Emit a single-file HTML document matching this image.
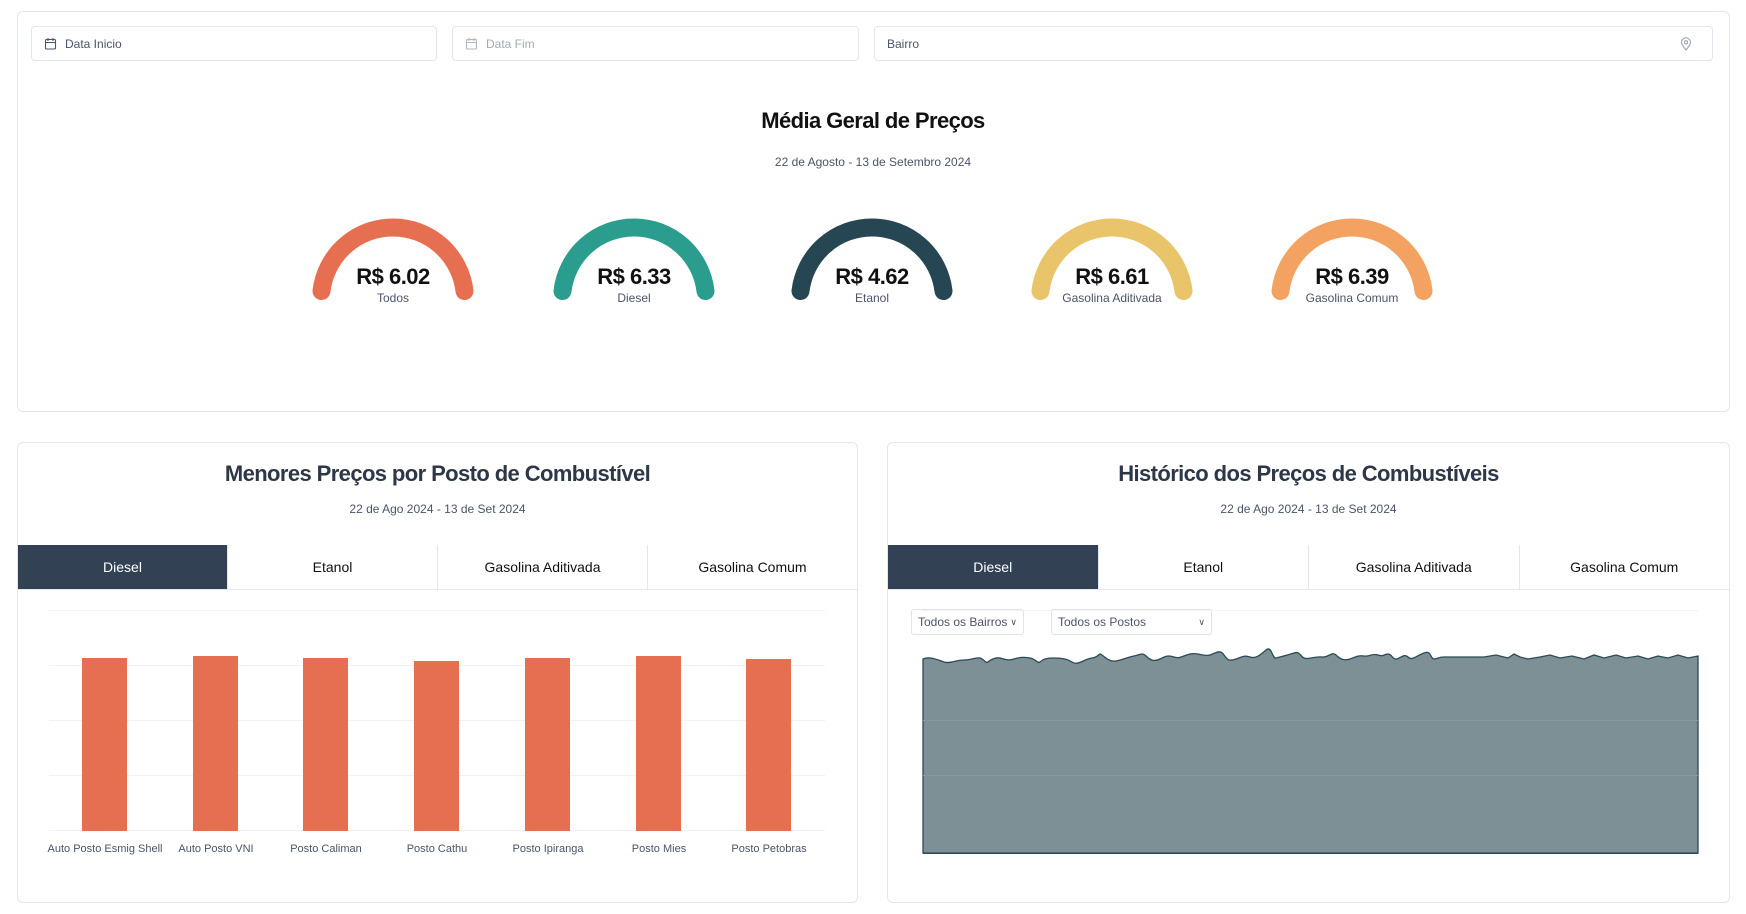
<!DOCTYPE html>
<html><head><meta charset="utf-8"><style>
*{box-sizing:border-box;margin:0;padding:0}
html,body{width:1746px;height:914px;overflow:hidden}
body{background:#fff;font-family:"Liberation Sans",sans-serif;position:relative}
.card{position:absolute;border:1px solid #e2e6ee;border-radius:6px;background:#fff;overflow:hidden}
.inp{position:absolute;top:26px;height:35px;border:1px solid #e2e6ee;border-radius:4px;font-size:12px;color:#4a5568;display:flex;align-items:center;padding-left:12px}
.inp svg{margin-right:8px}
.ab{position:absolute;text-align:center;width:100%}
.g{position:absolute;top:216px;width:180px;height:100px;text-align:center}
.g svg{position:absolute;left:0;top:0}
.g .v{position:absolute;top:48px;width:180px;font-size:22px;font-weight:bold;color:#111;letter-spacing:-0.5px}
.g .l{position:absolute;top:75px;width:180px;font-size:12px;color:#4a5568}
.tabs{position:absolute;top:102px;left:0;right:0;height:45px;display:flex;border-bottom:1px solid #e2e6ee}
.tabs div{flex:1;display:flex;align-items:center;justify-content:center;font-size:14px;color:#111;border-left:1px solid #e2e6ee}
.tabs div.a{background:#334155;color:#fff;border-left:none}
.t{font-size:22px;font-weight:bold;color:#2d3748;letter-spacing:-0.6px}
.s{font-size:12px;color:#4a5568}
.xl{position:absolute;top:400px;font-size:11px;color:#4a5568;width:130px;text-align:center}
.sel{position:absolute;top:166px;height:26px;border:1px solid #dfe3ea;border-radius:3px;font-size:12px;color:#4a5568;padding-left:6px;display:flex;align-items:center}
.sel span{position:absolute;right:6px;font-size:9px}
</style></head><body>
<div class="card" style="left:17px;top:11px;width:1713px;height:401px"></div>
<div class="inp" style="left:31px;width:406px"><svg width="13" height="13" viewBox="0 0 13 13" fill="none" stroke="#4a5568" stroke-width="1.1"><rect x="1.5" y="2.5" width="10" height="9.5" rx="1"/><path d="M1.5 5.5h10M4 1v3M9 1v3"/></svg>Data Inicio</div>
<div class="inp" style="left:452px;width:407px;color:#a0aab8"><svg width="13" height="13" viewBox="0 0 13 13" fill="none" stroke="#b0b8c4" stroke-width="1.1"><rect x="1.5" y="2.5" width="10" height="9.5" rx="1"/><path d="M1.5 5.5h10M4 1v3M9 1v3"/></svg>Data Fim</div>
<div class="inp" style="left:874px;width:839px">Bairro<svg style="position:absolute;right:12px" width="12" height="14" viewBox="0 0 12 14" fill="none" stroke="#9aa3b0" stroke-width="1.1"><path d="M6 13C3 9.5 1.5 7.3 1.5 5.3a4.5 4.5 0 0 1 9 0C10.5 7.3 9 9.5 6 13z"/><circle cx="6" cy="5.3" r="1.6"/></svg></div>
<div class="ab" style="top:108px;font-size:22px;font-weight:bold;color:#111;letter-spacing:-0.6px">Média Geral de Preços</div>
<div class="ab s" style="top:155px">22 de Agosto - 13 de Setembro 2024</div>

<div class="g" style="left:303px"><svg width="180" height="100" viewBox="0 0 180 100"><path d="M18.5 75 A72 72 0 0 1 161.5 75" fill="none" stroke="#e76f51" stroke-width="18" stroke-linecap="round"/></svg><div class="v">R$ 6.02</div><div class="l">Todos</div></div>
<div class="g" style="left:544px"><svg width="180" height="100" viewBox="0 0 180 100"><path d="M18.5 75 A72 72 0 0 1 161.5 75" fill="none" stroke="#2a9d8f" stroke-width="18" stroke-linecap="round"/></svg><div class="v">R$ 6.33</div><div class="l">Diesel</div></div>
<div class="g" style="left:782px"><svg width="180" height="100" viewBox="0 0 180 100"><path d="M18.5 75 A72 72 0 0 1 161.5 75" fill="none" stroke="#264653" stroke-width="18" stroke-linecap="round"/></svg><div class="v">R$ 4.62</div><div class="l">Etanol</div></div>
<div class="g" style="left:1022px"><svg width="180" height="100" viewBox="0 0 180 100"><path d="M18.5 75 A72 72 0 0 1 161.5 75" fill="none" stroke="#e9c46a" stroke-width="18" stroke-linecap="round"/></svg><div class="v">R$ 6.61</div><div class="l">Gasolina Aditivada</div></div>
<div class="g" style="left:1262px"><svg width="180" height="100" viewBox="0 0 180 100"><path d="M18.5 75 A72 72 0 0 1 161.5 75" fill="none" stroke="#f4a261" stroke-width="18" stroke-linecap="round"/></svg><div class="v">R$ 6.39</div><div class="l">Gasolina Comum</div></div>

<div class="card" style="left:17px;top:442px;width:841px;height:461px">
 <div class="ab t" style="top:18px">Menores Preços por Posto de Combustível</div>
 <div class="ab s" style="top:59px">22 de Ago 2024 - 13 de Set 2024</div>
 <div class="tabs"><div class="a">Diesel</div><div>Etanol</div><div>Gasolina Aditivada</div><div>Gasolina Comum</div></div>
 <svg style="position:absolute;left:0;top:0" width="841" height="461">
  <g stroke="#f0f2f5" stroke-width="1"><path d="M31 167.5h776M31 222.5h776M31 277.5h776M31 332.5h776M31 387.5h776"/></g>
  <g fill="#e76f51">
   <rect x="64" y="215" width="45" height="173"/><rect x="175" y="213" width="45" height="175"/><rect x="285" y="215" width="45" height="173"/><rect x="396" y="218" width="45" height="170"/><rect x="507" y="215" width="45" height="173"/><rect x="618" y="213" width="45" height="175"/><rect x="728" y="216" width="45" height="172"/>
  </g>
 </svg>
 <div class="xl" style="left:22px">Auto Posto Esmig Shell</div>
 <div class="xl" style="left:133px">Auto Posto VNI</div>
 <div class="xl" style="left:243px">Posto Caliman</div>
 <div class="xl" style="left:354px">Posto Cathu</div>
 <div class="xl" style="left:465px">Posto Ipiranga</div>
 <div class="xl" style="left:576px">Posto Mies</div>
 <div class="xl" style="left:686px">Posto Petobras</div>
</div>

<div class="card" style="left:887px;top:442px;width:843px;height:461px">
 <div class="ab t" style="top:18px">Histórico dos Preços de Combustíveis</div>
 <div class="ab s" style="top:59px">22 de Ago 2024 - 13 de Set 2024</div>
 <div class="tabs"><div class="a">Diesel</div><div>Etanol</div><div>Gasolina Aditivada</div><div>Gasolina Comum</div></div>
 <svg style="position:absolute;left:0;top:0" width="843" height="461">
  <path d="M34 167.5h776" stroke="#f0f2f5"/>
  <path d="M35 216 C42 213 50 217 56 219 S68 217 76 217 S88 214 92 215 S98 221 100 219 S108 214 112 215 S120 218 126 216 S136 214 142 215 S150 221 152 219 S158 215 164 215 S178 215 184 219 S196 216 204 215 S210 209 214 212 S222 219 228 218 S240 214 246 213 S254 209 258 213 S266 219 272 216 S280 212 286 214 S294 213 302 211 S316 214 322 212 S332 206 336 212 S342 218 348 216 S356 212 362 214 S372 212 378 207 S384 216 388 215 S400 212 406 210 S412 213 416 215 S428 213 434 214 S444 208 448 212 S456 218 462 216 S470 212 476 213 S484 210 490 212 S496 211 500 211 S504 216 508 216 S516 210 520 214 S528 213 536 210 S542 216 546 216 S550 214 556 214 L560 214 L596 214 L608 212 L620 215 L626 211 L632 214 L640 216 L652 214 L662 212 L672 215 L684 213 L696 216 L706 212 L716 215 L728 212 L738 215 L750 213 L760 216 L770 213 L780 215 L790 212 L800 215 L810 213 L810 410 L35 410 Z" fill="#7d9096" stroke="#2b4a55" stroke-width="1.3"/>
  <path d="M35 410.5h775" stroke="#2b4a55" stroke-width="1"/>
  <g stroke="#86989e" stroke-width="1"><path d="M35 277.5h775M35 332.5h775"/></g>
 </svg>
 <div class="sel" style="left:23px;width:113px">Todos os Bairros<span>&#8744;</span></div>
 <div class="sel" style="left:163px;width:161px">Todos os Postos<span>&#8744;</span></div>
</div>
</body></html>
